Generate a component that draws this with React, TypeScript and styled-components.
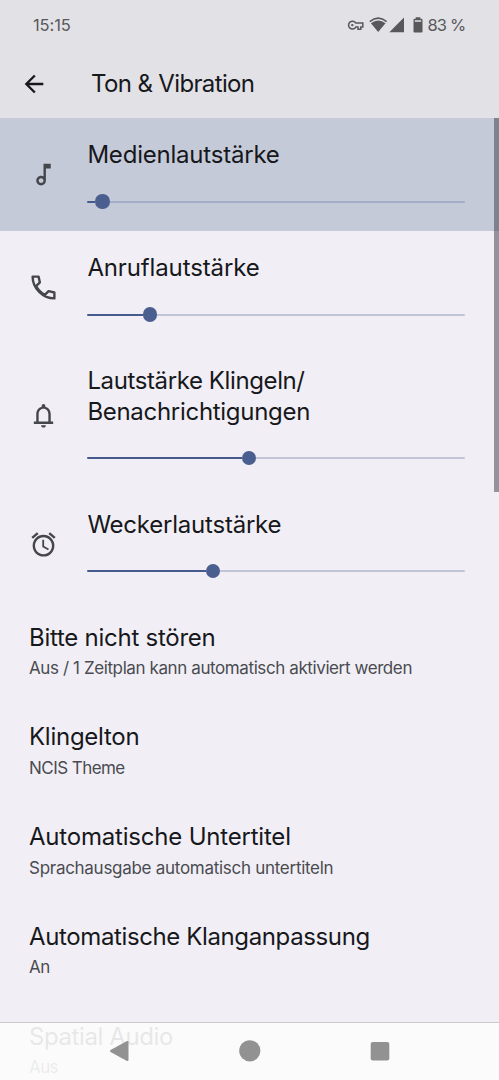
import React from 'react';
import styled, { createGlobalStyle } from 'styled-components';

const GlobalStyle = createGlobalStyle`
  * { box-sizing: border-box; }
  html, body { margin: 0; padding: 0; height: 100%; overflow: hidden; }
  body { background: #f1eff5; font-family: Inter, Roboto, sans-serif; color: #17181c; }
`;

const Screen = styled.div`
  position: relative;
  display: flex;
  flex-direction: column;
  width: 499px;
  height: 1080px;
  overflow: hidden;
  background: #f1eff5;
`;

const Header = styled.header`
  flex: none;
  height: 118px;
  background: #e2e1e6;
`;

const StatusBar = styled.div`
  display: flex;
  align-items: center;
  height: 50px;
  padding: 0 35px 0 33px;
  font-size: 16.5px;
  color: #58585a;
`;

const Clock = styled.span`
  flex: 1;
  letter-spacing: -0.1px;
`;

const StatusIcons = styled.div`
  display: flex;
  align-items: center;
`;

const Percent = styled.span`
  margin-left: 2.5px;
  width: 36.5px;
  white-space: nowrap;
  letter-spacing: -0.85px;
`;

const TitleBar = styled.div`
  display: flex;
  align-items: center;
  height: 67px;
  padding-left: 20px;
`;

const Text = styled.span<{ $spacing?: number }>`
  display: block;
  white-space: nowrap;
  letter-spacing: ${(p) => p.$spacing ?? 0}px;
`;

const PageTitle = styled(Text)`
  margin-left: 43px;
  font-size: 24px;
  font-weight: 400;
`;

const Content = styled.main`
  flex: 1;
  min-height: 0;
  overflow: hidden;
`;

const VolumeRow = styled.section<{ $active?: boolean }>`
  display: flex;
  align-items: center;
  padding: 22px 34.5px 22px 29px;
  background: ${(p) => (p.$active ? '#c5cad8' : 'transparent')};
`;

const IconSlot = styled.div`
  display: flex;
  flex: none;
  width: 58.4px;
  color: #45464c;
`;

const VolumeBody = styled.div`
  flex: 1;
`;

const Title = styled(Text)`
  font-size: 24px;
  line-height: 30.5px;
  font-weight: 400;
`;

const Slider = styled.div`
  display: flex;
  align-items: center;
  height: 15px;
  margin-top: 23.5px;
`;

const TrackFill = styled.div`
  height: 2px;
  border-radius: 1px 0 0 1px;
  background: #455b8e;
`;

const Thumb = styled.div`
  flex: none;
  width: 14.5px;
  height: 14.5px;
  border-radius: 50%;
  background: #4a5e8f;
`;

const TrackRest = styled.div<{ $active?: boolean }>`
  flex: 1;
  height: 2px;
  border-radius: 0 1px 1px 0;
  background: ${(p) => (p.$active ? '#a2adc9' : '#c0c6d8')};
`;

const Entry = styled.section`
  height: 99.75px;
  padding: 22px 29px 0;
`;

const Summary = styled(Text)`
  margin-top: 5px;
  font-size: 17px;
  line-height: 21px;
  font-weight: 400;
  color: #4a4b51;
`;

const Scrollbar = styled.div`
  position: absolute;
  top: 118px;
  right: 0;
  width: 5px;
  height: 374px;
  background: rgba(56, 56, 68, 0.5);
`;

const NavBar = styled.nav`
  position: absolute;
  left: 0;
  right: 0;
  bottom: 0;
  display: flex;
  align-items: center;
  justify-content: center;
  gap: 109px;
  height: 58px;
  padding: 0 0 1.5px;
  border-top: 1px solid #cacacb;
  background: rgba(252, 252, 252, 0.91);
`;

const volumes = [
  { icon: 'music', lines: [['Medienlautstärke', -0.21]], fill: 8 },
  { icon: 'phone', lines: [['Anruflautstärke', -0.13]], fill: 55.5 },
  { icon: 'bell', lines: [['Lautstärke Klingeln/', -0.39], ['Benachrichtigungen', -0.3]], fill: 154.5 },
  { icon: 'alarm', lines: [['Weckerlautstärke', -0.22]], fill: 118.5 },
] as { icon: string; lines: [string, number][]; fill: number }[];

const entries: [string, number, string, number][] = [
  ['Bitte nicht stören', -0.26, 'Aus / 1 Zeitplan kann automatisch aktiviert werden', -0.4],
  ['Klingelton', -0.26, 'NCIS Theme', -0.55],
  ['Automatische Untertitel', -0.2, 'Sprachausgabe automatisch untertiteln', -0.28],
  ['Automatische Klanganpassung', -0.38, 'An', -0.4],
  ['Spatial Audio', -0.4, 'Aus', -0.6],
];

const paths: Record<string, string> = {
  music: 'M12 3l.01 10.55c-.59-.34-1.27-.55-2-.55C7.79 13 6 14.79 6 17s1.79 4 4.01 4S14 19.21 14 17V7h4V3h-6zm-1.99 16c-1.1 0-2-.9-2-2s.9-2 2-2 2 .9 2 2-.9 2-2 2z',
  bell: 'M12 22c1.1 0 2-.9 2-2h-4c0 1.1.9 2 2 2zM18 17v-6c0-3.07-1.63-5.64-4.5-6.32V4c0-.83-.67-1.5-1.5-1.5s-1.5.67-1.5 1.5v.68C7.64 5.36 6 7.92 6 11v6H4v2h16v-2h-2zm-2 0H8v-6c0-2.48 1.51-4.5 4-4.5s4 2.02 4 4.5v6z',
  alarm: 'M22 5.72l-4.6-3.86-1.29 1.53 4.6 3.86L22 5.72zM7.88 3.39L6.6 1.86 2 5.71l1.29 1.53 4.59-3.85zM12.5 8H11v6l4.75 2.85.75-1.23-4-2.37V8zM12 4c-4.97 0-9 4.03-9 9s4.02 9 9 9a9 9 0 0 0 0-18zm0 16c-3.87 0-7-3.13-7-7s3.13-7 7-7 7 3.13 7 7-3.13 7-7 7z',
};

function RowIcon({ name }: { name: string }) {
  if (name === 'phone') {
    return (
      <svg width="29" height="29" viewBox="0 0 24 24" fill="none" stroke="currentColor" strokeWidth="2" strokeLinejoin="round">
        <path d="M3 3h4.900l1.100 4.800-3.100 3.100c1.700 3.200 4 5.600 7.200 7.200l3.100-3.100 4.800 1.100V21C11.500 21 3 12.500 3 3z" />
      </svg>
    );
  }
  return (
    <svg width="29" height="29" viewBox="0 0 24 24" fill="currentColor">
      <path d={paths[name]} />
    </svg>
  );
}

export default function App() {
  return (
    <Screen>
      <GlobalStyle />
      <Header>
        <StatusBar>
          <Clock>15:15</Clock>
          <StatusIcons>
            <svg width="78" height="18" viewBox="0 0 78 18">
              <g fill="none" stroke="#58585a" strokeWidth="1.500">
                <path d="M8.800 7.100A3.900 3.900 0 1 0 8.800 11.100H11V13.200H13.800V11.100H15.800V7.100Z" />
              </g>
              <circle cx="5.300" cy="9.100" r="1.200" fill="#58585a" />
              <path d="M22.800 5.600Q31.200-1.400 39.600 5.600" fill="none" stroke="#58585a" strokeWidth="1.500" />
              <path d="M23.900 7.300Q31.200 1.500 38.500 7.300L31.200 16Z" fill="#58585a" />
              <path d="M57 1.500V16.200H42.300Z" fill="#58585a" />
              <path d="M68.700 1.200h4.600v1.500h1.200q1 0 1 1V15.500q0 1-1 1h-7q-1 0-1-1V3.700q0-1 1-1h1.200zM67.800 4.300v1.500h6.400V4.300z" fill="#58585a" fillRule="evenodd" />
            </svg>
            <Percent>83 %</Percent>
          </StatusIcons>
        </StatusBar>
        <TitleBar>
          <svg width="28" height="28" viewBox="0 0 24 24" fill="#17181c">
            <path d="M20 11H7.830l5.590-5.590L12 4l-8 8 8 8 1.410-1.410L7.830 13H20z" />
          </svg>
          <PageTitle $spacing={-0.64}>Ton &amp; Vibration</PageTitle>
        </TitleBar>
      </Header>
      <Content>
        {volumes.map((v, i) => (
          <VolumeRow key={v.icon} $active={i === 0}>
            <IconSlot><RowIcon name={v.icon} /></IconSlot>
            <VolumeBody>
              {v.lines.map(([text, spacing]) => <Title key={text} $spacing={spacing}>{text}</Title>)}
              <Slider>
                <TrackFill style={{ width: v.fill }} />
                <Thumb />
                <TrackRest $active={i === 0} />
              </Slider>
            </VolumeBody>
          </VolumeRow>
        ))}
        {entries.map(([title, ts, summary, ss]) => (
          <Entry key={title}>
            <Title $spacing={ts}>{title}</Title>
            <Summary $spacing={ss}>{summary}</Summary>
          </Entry>
        ))}
      </Content>
      <Scrollbar />
      <NavBar>
        <svg width="21" height="22" viewBox="0 0 21 22">
          <path d="M2 11L18.500 2V20Z" fill="#929292" stroke="#929292" strokeWidth="2" strokeLinejoin="round" />
        </svg>
        <svg width="22" height="22" viewBox="0 0 22 22"><circle cx="10.800" cy="10.800" r="10.600" fill="#929292" /></svg>
        <svg width="21" height="22" viewBox="0 0 21 22"><rect x=".7" y="2" width="18.600" height="18.600" rx="2" fill="#929292" /></svg>
      </NavBar>
    </Screen>
  );
}
